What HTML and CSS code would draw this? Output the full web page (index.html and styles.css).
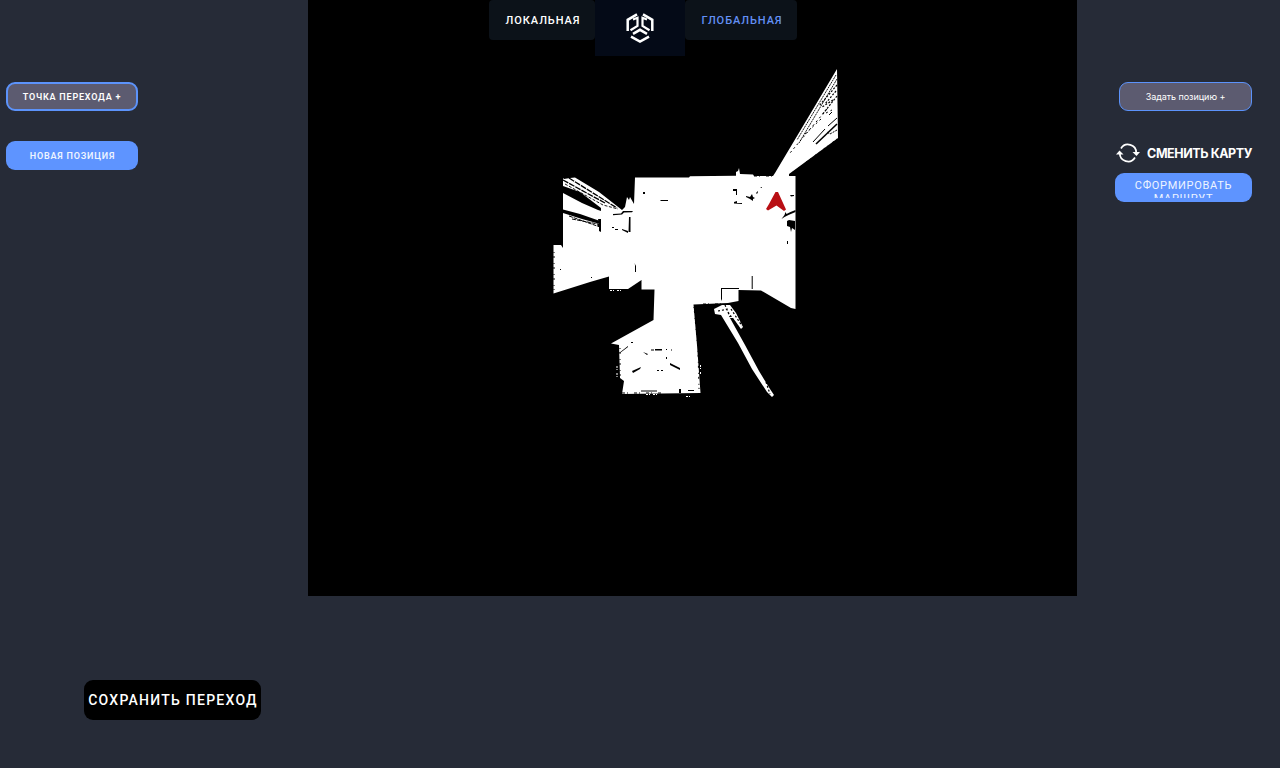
FILE: index.html
```html
<!DOCTYPE html>
<html lang="ru">
<head>
<meta charset="utf-8">
<title>Карта</title>
<link rel="stylesheet" href="styles.css">
</head>
<body>
<div class="layout">
  <aside class="left">
    <div class="left-actions">
      <button class="btn btn-outline btn-strong">ТОЧКА ПЕРЕХОДА +</button>
      <button class="btn btn-blue btn-new">НОВАЯ ПОЗИЦИЯ</button>
    </div>
    <button class="save">СОХРАНИТЬ ПЕРЕХОД</button>
  </aside>
  <main class="map">
    <svg class="map-svg" viewBox="308 0 769 596">
      <path fill="#fff" d="M635 177.500L689 177.500L690 176.200L736 175.800L736 172L738 171L739 168L740 174L753 174.500L754 176L773 176L775 173L837 69L838 138L789 174L789 176H795.500V309L791 308L761 290.500L738.500 290V301L728 303L693.500 304.500L697 345L700.500 393L622 394L624 381L620 378L619 345L611 343.500L653.500 320L654.500 289.500H641.500V280L628 289H609V276.500L590 282L553.500 293.500V245L561 245L563 248V178L564 179L570 178L575 177.500L599 192L622 210L625 207L627 197L629 200L630 197L634 204Z"/>
      <g fill="#000">
        <path d="M563 186L580 192L601 208V211L598 210L582 203L563 193ZM563 209.500L580 214L600 221V224L582 219L563 213ZM598 219l3 0v13l-2-1v-4l-2-2 2-2z"/>
        <path d="M613 214l8-.5 2-2.500 10 0-1 1.200-8 .3-2 2-9 .8z"/>
        <path d="M629 217h1.500v15h-2zM622 229l6 2v2l-6-3zM612 227h2v1h-2zM615 229h3v1h-3zM660 200l8 0v1h-7zM643 192h2v2h-2zM634.500 263l1.500 3v6h-1v-7zM751.700 276h1v13h-1zM721 288h18v1h-17v10l-1 2zM560 269h1v1h-1zM591 277h1v1h-1z"/>
        <path d="M733 189h4v6h-1v-4h-3zM734 202l3-1 0 2 5 0v1l-8-.5zM746 196l4 1 2-3 1 3 2 1-2 1 0 2-3-2-4-2zM756 193l2-2v1l-1 2zM760 188l2-1v1z"/>
        <path d="M795.500 210l-5 2-4 2-1-2-1 3-3 4 3-2 4-2 7-3zM787 221l2-1 6 1v9l-3-2-1 4-1-5-3-1zM790 195l4 0v1l-3 .5zM787 241h1v3h-1z"/>
        <path d="M651 349.500h3v1h-3zM655 349h7v1.500h-7zM666 349h1v1h-1zM671 349.500h1v1h-1zM632 371l9-4-1 2-7 4zM670 363l10 5v2l-10-5zM619 353l9-7 0 1-8 6zM643 352l5 2-1 1zM657 370h2v1h-2zM661 370h2v1h-2zM631 342h2v1h-2zM666 357h1v2h-1zM679 389h2v4h-2zM641 390.500h16v1h-16zM688 390h6v1h-6z"/>
      </g>
      <g fill="none" stroke="#000">
        <path d="M563 180L605 203M569 178L617 208" stroke-width="1.300" stroke-dasharray="6 1"/>
        <path d="M565 184L603 205L618 209" stroke-width=".9" stroke-dasharray="3 1.500"/>
        <path d="M569 216L600 227M572 219L598 224" stroke-dasharray="4 1"/>
        <path d="M836 75L797 140M837 79L799 143" stroke-width=".9" stroke-dasharray="2 .7"/>
        <path d="M837 85L819 106M836 91L825 104M837 96L822 115M833 100L822 107" stroke-width="1.200" stroke-dasharray="2 1.500"/>
        <path d="M827 109L790 153M821 119L803 136M826 113L832 110" stroke-dasharray="2 3"/>
        <path d="M825 129L813 142M837 118L828 126M829 115L832 112" />
        <path d="M837 124L816 144" stroke-width="1.600"/>
        <path d="M837 130L830 134L827 132" stroke-dasharray="2 1"/>
        <path d="M837 139L789 175M694 307L698 350L699 389M554 252V290M620 348V380" stroke-dasharray="1 3 2 5"/>
        <path d="M754 176H774M703 304H730M622 393H662" stroke-dasharray="3 2 1 6"/>
      </g>
      <path fill="#fff" d="M714 309l8-4 8 0 6 8 7 14-2 2-8-11-3 0 15 27 14 26 11 18 4 6-2 2-5-5-15-23-14-26-17-28-6-1z"/>
      <path d="M731 309L742 326M728 312L739 328M718 311L728 309M725 305L730 317M766 382L770 394" fill="none" stroke="#000" stroke-width="1.200" stroke-dasharray="2 2"/>
      <path d="M610 290.500H622M617 366V379M700.500 365V374M686 396.500H693M646 394.500H658" fill="none" stroke="#fff" stroke-dasharray="2 1 1 3"/>
      <path class="robot" d="M775.500 192H778L786 209.500L784 211L776.500 205.500L768 210.500L766 209L769 204Z"/>
    </svg>
    <nav class="tabs">
      <a class="tab tab-local">ЛОКАЛЬНАЯ</a>
      <div class="logo">
        <svg width="30" height="32" viewBox="0 0 30 32" fill="none" stroke="#fff" stroke-width="2.500">
          <path d="M2.700 19V7.800L12 2.300M27.300 19V7.800L18 2.300"/>
          <path d="M8 7.500L12.500 5.800V14L5.500 18.300M22 7.500L17.500 5.800V14L24.500 18.300" stroke-width="2.200"/>
          <path d="M8 21.800L15 17.800L22 21.800M6 24.700L15 29.600L24 24.700"/>
        </svg>
      </div>
      <a class="tab tab-global">ГЛОБАЛЬНАЯ</a>
    </nav>
  </main>
  <aside class="right">
    <button class="btn btn-outline btn-position">Задать позицию +</button>
    <div class="change">
      <svg width="24" height="20" viewBox="0 0 24 20">
        <path d="M5 5.500A8.200 8.200 0 0 1 20.200 10M19 14.500A8.200 8.200 0 0 1 3.800 10" fill="none" stroke="#fff" stroke-width="1.700"/>
        <path d="M0 11.500L3.500 7.500L7.500 11.500ZM16.500 9L20.500 13L24 9Z" fill="#fff"/>
      </svg>
      <span>СМЕНИТЬ КАРТУ</span>
    </div>
    <button class="btn btn-blue btn-route"><span>СФОРМИРОВАТЬ МАРШРУТ</span></button>
  </aside>
</div>
</body>
</html>
```
FILE: styles.css
```css
* { box-sizing: border-box; }
body { margin: 0; background: #262b37; font-family: Roboto, sans-serif; color: #fff; overflow: hidden; }
button { font-family: inherit; color: inherit; border: 0; margin: 0; padding: 0; }
.layout { display: grid; grid-template-columns: 308px 769px 1fr; height: 768px; }
.left { display: flex; flex-direction: column; justify-content: space-between; padding: 82px 0 48px 6px; }
.left-actions { display: flex; flex-direction: column; gap: 30px; }
.btn { width: 132px; height: 29px; border-radius: 9px; font-size: 9px; font-weight: 500; letter-spacing: 0.8px; white-space: nowrap; }
.btn-outline { background: #5c5b70; border: 1.5px solid #5c93fb; }
.btn-strong { border-width: 2px; font-weight: 600; }
.btn-blue { background: #5e94ff; color: #eef4ff; }
.btn-new { padding-left: 1px; font-weight: 600; }
.save { width: 177px; height: 40px; margin-left: 78px; padding-left: 1px; border-radius: 9px; background: #000; font-size: 14px; font-weight: 500; letter-spacing: 1.25px; white-space: nowrap; }
.map { position: relative; height: 596px; background: #000; }
.map-svg { display: block; width: 769px; height: 596px; }
.robot { fill: #b90f14; filter: blur(0.7px); }
.tabs { position: absolute; top: 0; left: 181px; display: flex; align-items: flex-start; }
.tab { height: 40px; line-height: 41px; background: #0c1219; border-radius: 4px; text-align: center; font-size: 11px; font-weight: 500; letter-spacing: 0.93px; }
.tab-local { width: 106px; padding-left: 2px; }
.tab-global { width: 112px; padding-left: 2px; color: #6390f5; }
.logo { width: 90px; height: 56px; padding-top: 12px; background: #040a17; display: flex; justify-content: center; }
.right { display: flex; flex-direction: column; align-items: flex-end; padding: 82px 28px 0 0; }
.btn-position { width: 133px; font-family: Inter, sans-serif; font-weight: 400; letter-spacing: -0.05px; }
.change { display: flex; align-items: center; gap: 7px; height: 20px; margin-top: 32px; font-family: Inter, sans-serif; font-size: 12.5px; font-weight: 700; letter-spacing: -0.42px; white-space: nowrap; }
.btn-route { width: 137px; margin-top: 10px; padding: 6px 10px 4px; font-size: 11px; line-height: 13px; font-weight: 400; letter-spacing: 0.7px; white-space: normal; }
.btn-route span { display: block; height: 19px; overflow: hidden; }
```
